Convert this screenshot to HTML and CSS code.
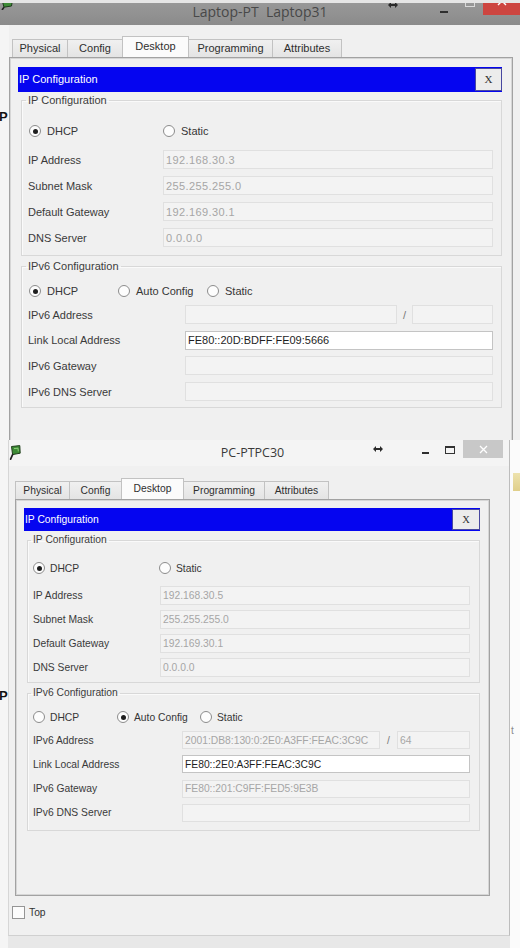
FILE: index.html
```html
<!DOCTYPE html>
<html lang="en">
<head>
<meta charset="utf-8">
<title>IP Configuration</title>
<link rel="stylesheet" href="styles.css">
</head>
<body>
<div class="screen">

  <!-- Laptop31 window (upper) -->
  <section class="win win-laptop">
    <div class="titlebar titlebar-dark">
      <svg class="app-icon" width="14" height="10" viewBox="0 0 14 10">
        <path d="M2 0 L12.5 0 L11.5 6 L4 7.2 Z" fill="#3e8c37" stroke="#1f3b1c" stroke-width="1"/>
        <path d="M4 7.2 L2 10" stroke="#222" stroke-width="1.6"/>
      </svg>
      <div class="title">Laptop-PT  Laptop31</div>
      <div class="controls">
        <svg class="ctl-arrows" width="10" height="6" viewBox="0 0 10 6"><path d="M0 3 L3 0 L3 2 L7 2 L7 0 L10 3 L7 6 L7 4 L3 4 L3 6 Z" fill="#2a2a2a"/></svg>
        <span class="ctl-min"></span>
        <span class="ctl-max"></span>
        <span class="ctl-close"><svg width="10" height="10" viewBox="0 0 10 10"><path d="M1 1 L9 9 M9 1 L1 9" stroke="#fff" stroke-width="1.4"/></svg></span>
      </div>
    </div>
    <div class="win-row">
      <div class="gutter"><span class="stray">P</span></div>
      <div class="win-body">
        <div class="tabs">
          <span class="tab">Physical</span>
          <span class="tab">Config</span>
          <span class="tab active">Desktop</span>
          <span class="tab">Programming</span>
          <span class="tab">Attributes</span>
        </div>
        <div class="panel">
          <div class="dialog-bar"><span class="dialog-title">IP Configuration</span><span class="dialog-x">X</span></div>

          <fieldset class="group g4">
            <legend>IP Configuration</legend>
            <div class="group-body">
              <div class="radios">
                <span class="radio checked first"><i></i>DHCP</span>
                <span class="radio"><i></i>Static</span>
              </div>
              <div class="row"><span class="lbl">IP Address</span><span class="field">192.168.30.3</span></div>
              <div class="row"><span class="lbl">Subnet Mask</span><span class="field">255.255.255.0</span></div>
              <div class="row"><span class="lbl">Default Gateway</span><span class="field">192.169.30.1</span></div>
              <div class="row"><span class="lbl">DNS Server</span><span class="field">0.0.0.0</span></div>
            </div>
          </fieldset>

          <fieldset class="group g6">
            <legend>IPv6 Configuration</legend>
            <div class="group-body">
              <div class="radios">
                <span class="radio checked first"><i></i>DHCP</span>
                <span class="radio second"><i></i>Auto Config</span>
                <span class="radio"><i></i>Static</span>
              </div>
              <div class="row"><span class="lbl">IPv6 Address</span><span class="split"><span class="field"></span><span class="slash">/</span><span class="field prefix"></span></span></div>
              <div class="row"><span class="lbl">Link Local Address</span><span class="field editable">FE80::20D:BDFF:FE09:5666</span></div>
              <div class="row"><span class="lbl">IPv6 Gateway</span><span class="field"></span></div>
              <div class="row"><span class="lbl">IPv6 DNS Server</span><span class="field"></span></div>
            </div>
          </fieldset>
        </div>
      </div>
    </div>
  </section>

  <!-- PC30 window (lower) -->
  <section class="win win-pc">
    <div class="gutter"><span class="stray">P</span></div>
    <div class="window">
      <div class="titlebar titlebar-light">
        <svg class="app-icon" width="12" height="16" viewBox="0 0 12 16">
          <path d="M2.5 1.5 L10.8 0.6 L11.2 8.2 L3.6 9.6 Z" fill="#3d8b35" stroke="#22401e" stroke-width="1"/>
          <path d="M5 3.6 L9 3.2 L9.3 6.4" fill="none" stroke="#8fd07a" stroke-width="1"/>
          <path d="M3.6 9.6 L1.6 14.2" stroke="#222" stroke-width="1.7" stroke-linecap="round"/>
        </svg>
        <div class="title">PC-PTPC30</div>
        <div class="controls">
          <svg class="ctl-arrows" width="10" height="6" viewBox="0 0 10 6"><path d="M0 3 L3 0 L3 2 L7 2 L7 0 L10 3 L7 6 L7 4 L3 4 L3 6 Z" fill="#2a2a2a"/></svg>
          <span class="ctl-min"></span>
          <span class="ctl-max"></span>
          <span class="ctl-close"><svg width="9" height="9" viewBox="0 0 9 9"><path d="M1 1 L8 8 M8 1 L1 8" stroke="#fff" stroke-width="1.3"/></svg></span>
        </div>
      </div>

      <div class="tabs">
        <span class="tab">Physical</span>
        <span class="tab">Config</span>
        <span class="tab active">Desktop</span>
        <span class="tab">Programming</span>
        <span class="tab">Attributes</span>
      </div>
      <div class="panel">
        <div class="dialog-bar"><span class="dialog-title">IP Configuration</span><span class="dialog-x">X</span></div>

        <fieldset class="group g4">
          <legend>IP Configuration</legend>
          <div class="group-body">
            <div class="radios">
              <span class="radio checked first"><i></i>DHCP</span>
              <span class="radio"><i></i>Static</span>
            </div>
            <div class="row"><span class="lbl">IP Address</span><span class="field">192.168.30.5</span></div>
            <div class="row"><span class="lbl">Subnet Mask</span><span class="field">255.255.255.0</span></div>
            <div class="row"><span class="lbl">Default Gateway</span><span class="field">192.169.30.1</span></div>
            <div class="row"><span class="lbl">DNS Server</span><span class="field">0.0.0.0</span></div>
          </div>
        </fieldset>

        <fieldset class="group g6">
          <legend>IPv6 Configuration</legend>
          <div class="group-body">
            <div class="radios">
              <span class="radio first"><i></i>DHCP</span>
              <span class="radio checked second"><i></i>Auto Config</span>
              <span class="radio"><i></i>Static</span>
            </div>
            <div class="row"><span class="lbl">IPv6 Address</span><span class="split"><span class="field">2001:DB8:130:0:2E0:A3FF:FEAC:3C9C</span><span class="slash">/</span><span class="field prefix">64</span></span></div>
            <div class="row"><span class="lbl">Link Local Address</span><span class="field editable">FE80::2E0:A3FF:FEAC:3C9C</span></div>
            <div class="row"><span class="lbl">IPv6 Gateway</span><span class="field">FE80::201:C9FF:FED5:9E3B</span></div>
            <div class="row"><span class="lbl">IPv6 DNS Server</span><span class="field"></span></div>
          </div>
        </fieldset>
      </div>

      <div class="top-check"><span class="checkbox"></span>Top</div>
    </div>
    <div class="outside">
      <span class="peek-yellow"></span>
      <span class="peek-t">t</span>
    </div>
  </section>

</div>
</body>
</html>
```
FILE: styles.css
```css
* { box-sizing: border-box; }
html, body { margin: 0; padding: 0; }
body {
  background: #f0f0f0;
  font-family: "Liberation Sans", Arial, sans-serif;
  color: #363636;
}

.screen {
  width: 520px;
  height: 948px;
  overflow: hidden;
  display: flex;
  flex-direction: column;
  background: #f0f0f0;
}

/* ---------- shared window parts ---------- */
.win { flex: none; overflow: hidden; }

.titlebar {
  flex: none;
  display: grid;
  grid-template-columns: 1fr auto 1fr;
  align-items: start;
  overflow: hidden;
}
.titlebar .title {
  font-family: "Open Sans", "Noto Sans", sans-serif;
  white-space: pre;
}
.controls {
  justify-self: end;
  display: flex;
  align-items: flex-start;
}
.ctl-min { display: block; width: 8px; height: 2px; background: #2e2e2e; }
.ctl-max { display: block; width: 10px; }
.ctl-close { display: flex; align-items: center; justify-content: center; }

.gutter { flex: none; background: #f5f5f5; }
.stray {
  display: block;
  font: bold 13px/13px "Liberation Sans", Arial, sans-serif;
  color: #111;
  margin-left: -1px;
}

.tabs { display: grid; align-items: end; }
.tab {
  display: block;
  text-align: center;
  color: #2f2f2f;
  background: linear-gradient(#f0f0f0, #e4e4e4);
  border: 1px solid #c2c2c2;
  border-bottom: none;
  margin-left: -1px;
}
.tab:first-child { margin-left: 0; }
.tab.active { background: #fbfbfb; position: relative; z-index: 1; }

.panel {
  border: 1px solid #a2a2a2;
  box-shadow: inset 1px 1px 0 #d6d6d6, inset -1px -1px 0 #d6d6d6;
  display: flex;
  flex-direction: column;
}

.dialog-bar {
  display: flex;
  align-items: stretch;
  background: #0505f0;
  color: #fff;
  overflow: hidden;
  flex: none;
}
.dialog-title { flex: 1; white-space: nowrap; }
.dialog-x {
  flex: none;
  display: flex;
  align-items: center;
  justify-content: center;
  background: #ececec;
  color: #333;
  border: 1px solid #4848a0;
  font-family: "Liberation Serif", serif;
}

.group {
  margin: 0;
  border: 1px solid #d8d8d8;
  box-shadow: inset 1px 1px 0 #fafafa;
  min-width: 0;
}
.group legend {
  padding: 0 2px;
  margin-left: -2px;
  line-height: 12px;
  color: #3c3c3c;
}
.group-body { display: flex; flex-direction: column; }

.radios { display: flex; align-items: center; height: 20px; }
.radio { display: flex; align-items: center; flex: none; white-space: nowrap; }
.radio i {
  width: 12px;
  height: 12px;
  border-radius: 50%;
  border: 1px solid #8c8c8c;
  background: #fdfdfd;
  display: flex;
  align-items: center;
  justify-content: center;
}
.radio.checked i::after {
  content: "";
  width: 5px;
  height: 5px;
  border-radius: 50%;
  background: #1e1e1e;
}

.row { display: grid; align-items: center; }
.lbl { white-space: nowrap; color: #3a3a3a; }
.field {
  display: flex;
  align-items: center;
  height: 100%;
  padding-left: 2px;
  background: #f3f3f3;
  border: 1px solid #e0e0e0;
  color: #a6a6a6;
  white-space: nowrap;
  overflow: hidden;
}
.field.editable {
  background: #fff;
  border-color: #c4c4c4;
  color: #1e1e1e;
}
.split { display: flex; height: 100%; }
.split .field:first-child { flex: 1; }
.slash { flex: none; display: flex; align-items: center; justify-content: center; color: #777; }
.split .prefix { flex: none; }

/* ---------- Laptop31 window ---------- */
.win-laptop {
  height: 440px;
  font-size: 11px;
  display: flex;
  flex-direction: column;
}
.titlebar-dark {
  height: 25px;
  background: linear-gradient(#989898, #8b8b8b);
  border-top: 3px solid #e6e6e6;
}
.titlebar-dark .app-icon { margin-top: -3px; }
.titlebar-dark .title { font-size: 14px; line-height: 18px; color: #484848; }
.titlebar-dark .ctl-arrows { margin-top: -1px; margin-right: 42px; }
.titlebar-dark .ctl-min { margin-top: 8px; margin-right: 17px; }
.titlebar-dark .ctl-max { height: 7px; margin-top: -3px; margin-right: 8px; border: 1px solid #dadada; border-top: none; }
.titlebar-dark .ctl-close {
  width: 37px;
  height: 15px;
  margin-top: -3px;
  background: #cd4540;
  align-items: flex-start;
}
.titlebar-dark .ctl-close svg { margin-top: -4px; }

.win-row { flex: 1; display: flex; min-height: 0; }
.win-laptop .gutter { width: 9px; }
.win-laptop .stray { margin-top: 85px; }
.win-body { flex: 1; display: flex; flex-direction: column; overflow: hidden; }

.win-laptop .tabs {
  margin-top: 11px;
  padding-left: 3px;
  height: 21px;
  grid-template-columns: 56px 55px 66px 84px 69px;
}
.win-laptop .tab { height: 18px; line-height: 17px; }
.win-laptop .tab.active { height: 21px; line-height: 19px; }

.win-laptop .panel {
  flex: none;
  width: 504px;
  height: 420px;
  padding: 9px 10px 0 8px;
}
.win-laptop .dialog-bar { height: 25px; line-height: 25px; }
.win-laptop .dialog-title { padding-left: 1px; }
.win-laptop .dialog-x { width: 27px; margin: 1px 0; font-size: 11px; }

.win-laptop .field { letter-spacing: 0.4px; }
.win-laptop .field.editable { letter-spacing: 0; }

.win-laptop .group { margin-left: 3px; }
.win-laptop .g4 { margin-top: 2px; padding: 15px 8px 8px 6px; }
.win-laptop .g6 { margin-top: 4px; padding: 9px 8px 6px 6px; }
.win-laptop .g4 .group-body { gap: 7px; }
.win-laptop .g4 .radios { margin-bottom: 2px; }
.win-laptop .g6 .group-body { gap: 6.7px; }
.win-laptop .g6 .radios { margin-bottom: -2.7px; }
.win-laptop .row { height: 19px; }
.win-laptop .g4 .row { grid-template-columns: 135px 1fr; }
.win-laptop .g6 .row { grid-template-columns: 157px 1fr; }
.win-laptop .radio i { margin: 0 6px 0 1px; }
.win-laptop .g4 .radio.first { width: 134px; }
.win-laptop .g6 .radio.first { width: 89px; }
.win-laptop .g6 .radio.second { width: 89px; }
.win-laptop .slash { width: 15px; }
.win-laptop .split .prefix { width: 81px; }

/* ---------- PC30 window ---------- */
.win-pc {
  height: 508px;
  font-size: 10.3px;
  display: flex;
  background: #e8e8e8;
}
.win-pc .gutter { width: 8px; }
.win-pc .stray { margin-top: 249px; }

.window {
  flex: none;
  width: 502px;
  height: 496px;
  background: #f0f0f0;
  border-left: 1px solid #d6d6d6;
  border-right: 1px solid #bdbdbd;
  border-bottom: 1px solid #d0d0d0;
  display: flex;
  flex-direction: column;
}

.titlebar-light { height: 26px; background: #f4f4f4; }
.titlebar-light .app-icon { margin-top: 5px; }
.titlebar-light .title { font-size: 12.5px; line-height: 26px; color: #3a3a3a; margin-right: 13px; }
.titlebar-light .ctl-arrows { margin-top: 6px; margin-right: 39px; }
.titlebar-light .ctl-min { margin-top: 12px; margin-right: 16px; width: 7px; }
.titlebar-light .ctl-max { height: 8px; margin-top: 6px; margin-right: 8px; border: 1px solid #333; border-top-width: 2px; }
.titlebar-light .ctl-close {
  width: 40px;
  height: 18px;
  margin-right: 6px;
  background: #c8c8c8;
}

.win-pc .tabs {
  margin-top: 12px;
  padding-left: 6px;
  height: 21px;
  grid-template-columns: 55px 52px 62px 81px 64px;
}
.win-pc .tab { height: 18px; line-height: 17px; }
.win-pc .tab.active { height: 21px; line-height: 19px; }

.win-pc .panel {
  flex: none;
  margin-left: 6px;
  width: 475px;
  height: 397px;
  padding: 8px 9px 0 8px;
}
.win-pc .dialog-bar { height: 23px; line-height: 23px; }
.win-pc .dialog-title { padding-left: 1px; }
.win-pc .dialog-x { width: 28px; margin: 1px 0; font-size: 10.5px; }

.win-pc .group { margin-left: 3px; }
.win-pc .g4 { margin-top: 3px; padding: 12px 9px 5px 5px; }
.win-pc .g6 { margin-top: 4px; padding: 8px 9px 8px 5px; }
.win-pc .g4 .group-body { gap: 5px; }
.win-pc .g4 .radios { margin-bottom: 3px; }
.win-pc .g6 .group-body { gap: 6.3px; }
.win-pc .g6 .radios { margin-bottom: -2.3px; }
.win-pc .g4 .row { height: 19px; grid-template-columns: 127px 1fr; }
.win-pc .g6 .row { height: 18px; grid-template-columns: 149px 1fr; }
.win-pc .radio i { margin: 0 5px 0 0; }
.win-pc .g4 .radio.first { width: 126px; }
.win-pc .g6 .radio.first { width: 84px; }
.win-pc .g6 .radio.second { width: 83px; }
.win-pc .slash { width: 17px; }
.win-pc .split .prefix { width: 73px; }

.top-check {
  display: flex;
  align-items: center;
  margin: 10px 0 0 3px;
  height: 13px;
  color: #333;
}
.checkbox {
  width: 13px;
  height: 13px;
  border: 1px solid #959595;
  background: #fcfcfc;
  margin-right: 4px;
}

.outside {
  flex: 1;
  background: #fbfbfb;
  display: flex;
  flex-direction: column;
  align-items: flex-start;
}
.peek-yellow {
  display: block;
  width: 7px;
  height: 18px;
  margin: 33px 0 0 3px;
  background: linear-gradient(#eadc9a, #d9c46e);
  opacity: 0.8;
}
.peek-t {
  display: block;
  margin-top: 235px;
  margin-left: 1px;
  font-size: 10px;
  line-height: 10px;
  color: #8a8a8a;
}
```
